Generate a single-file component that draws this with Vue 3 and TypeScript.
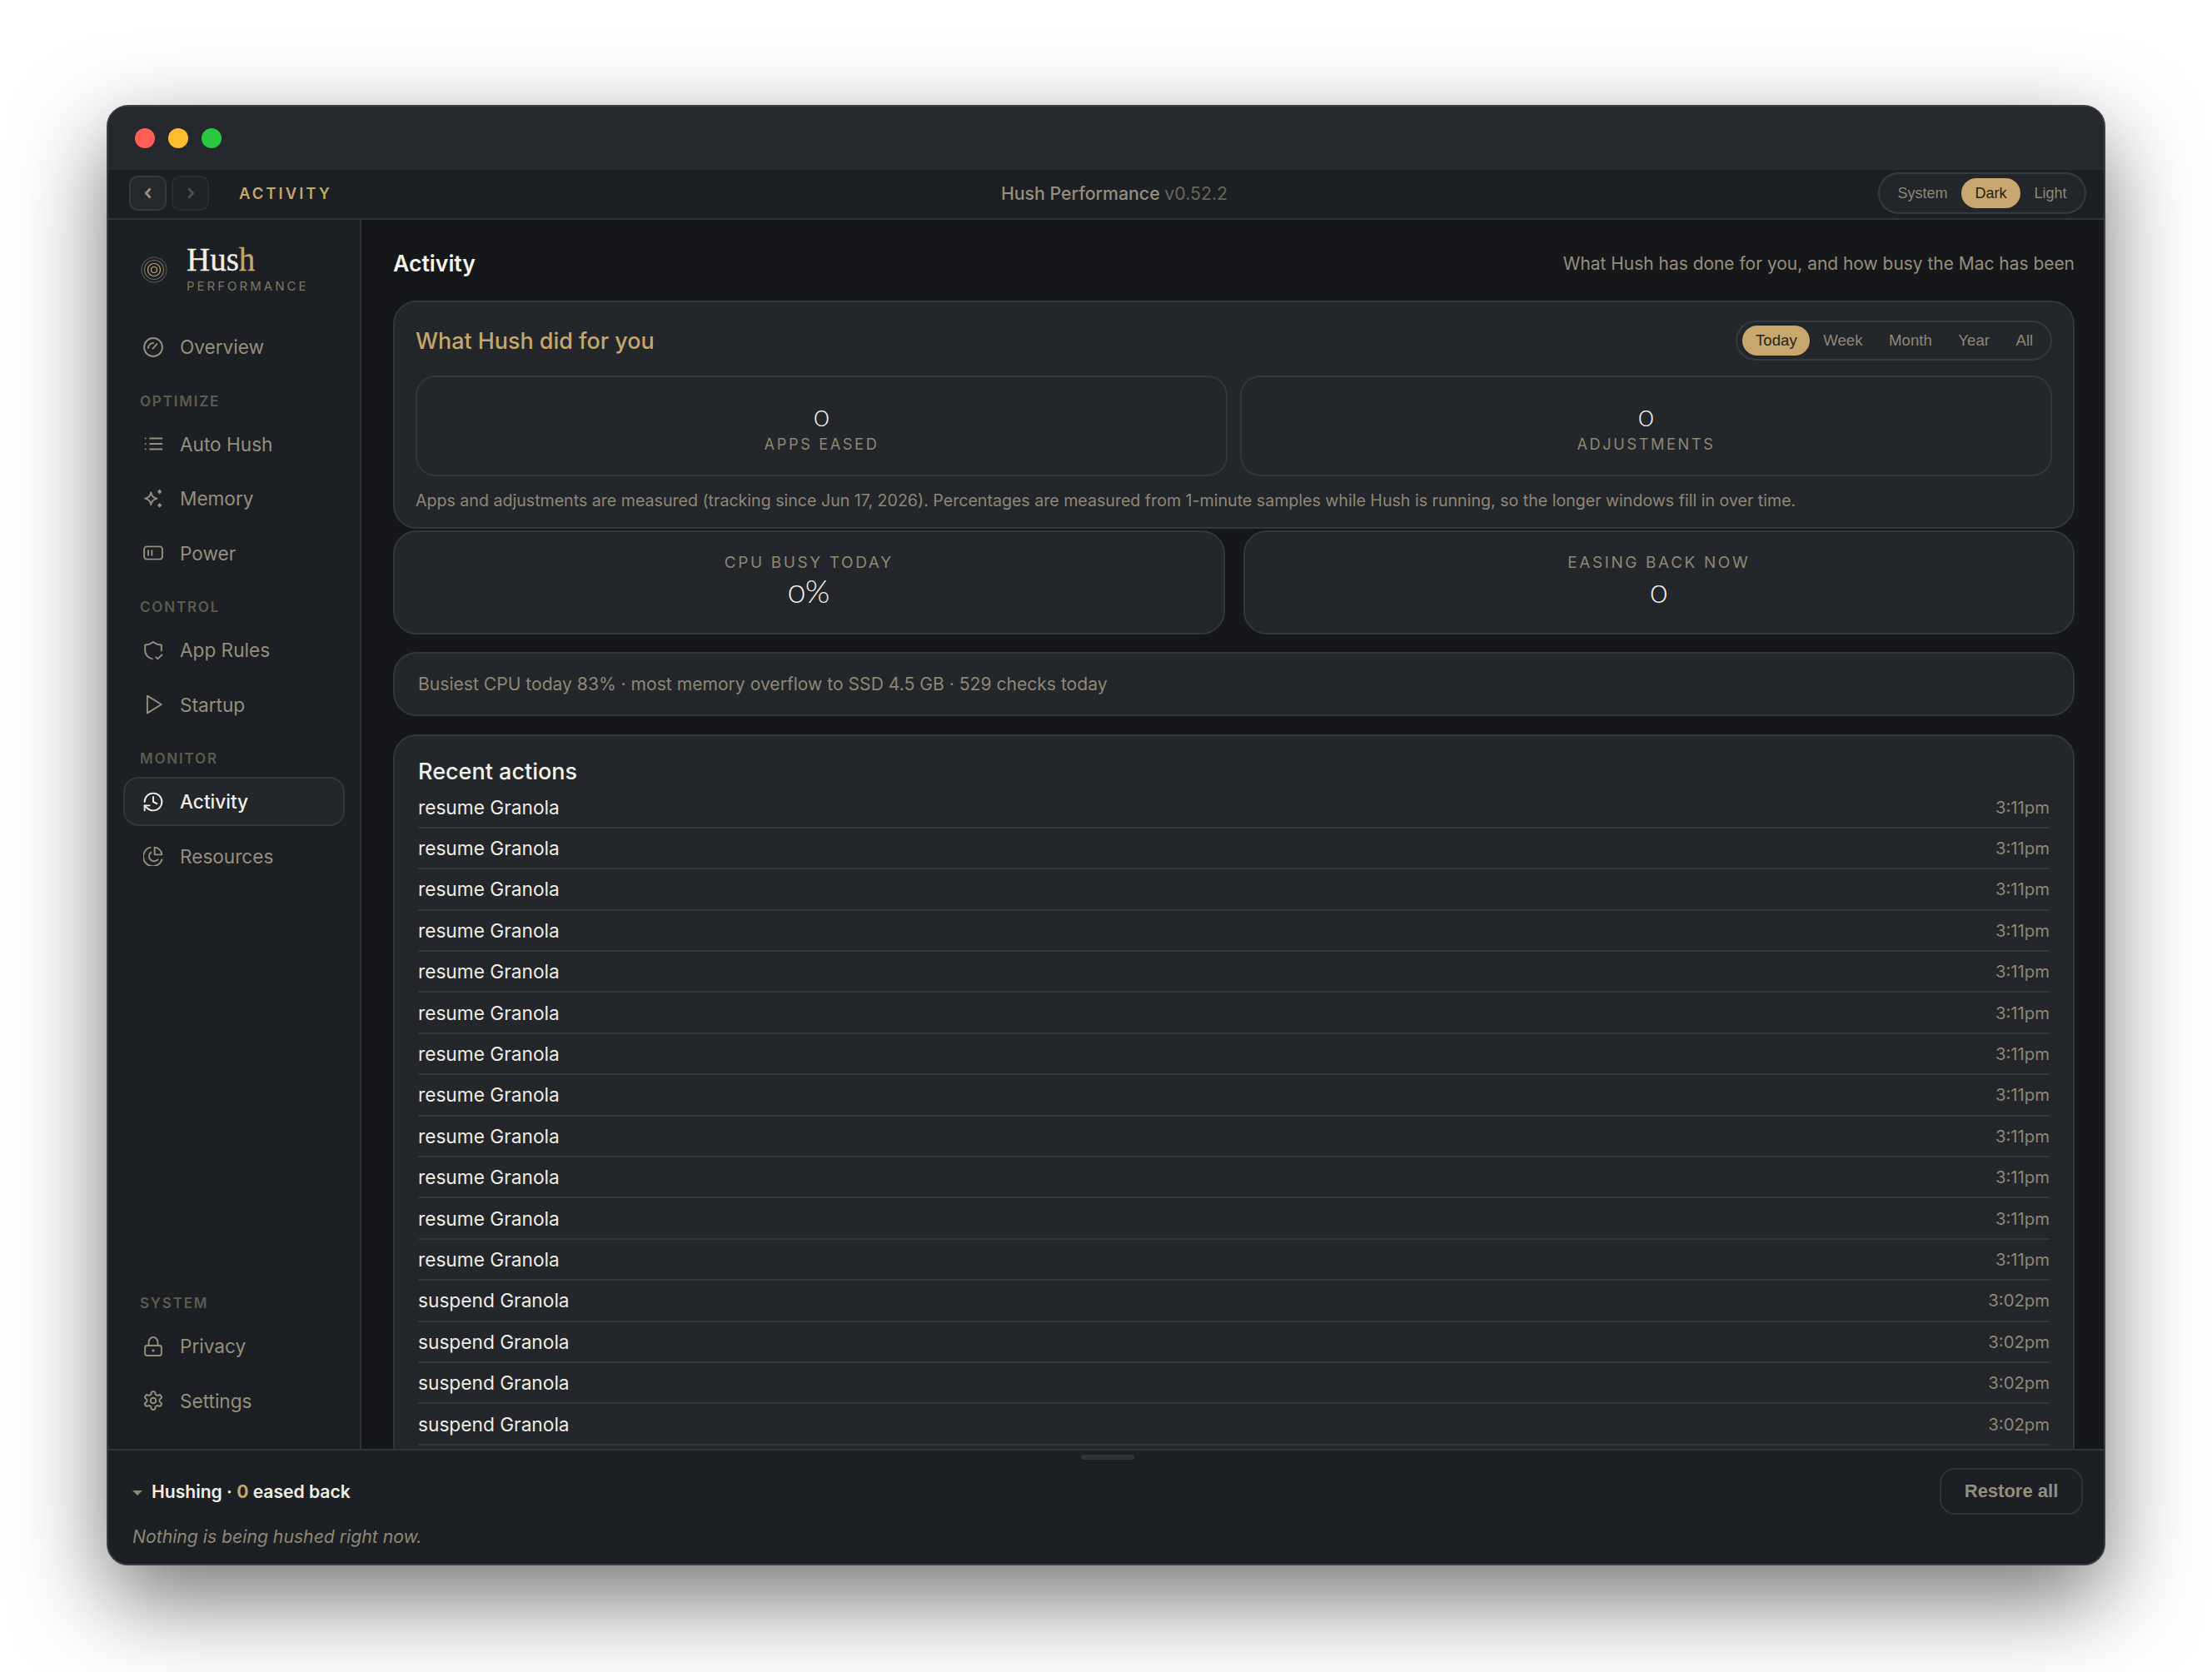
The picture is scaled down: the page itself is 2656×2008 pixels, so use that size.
<script setup lang="ts">
interface NavItem {
  label: string
  icon: string[]
  active?: boolean
}

const circle = (cx: number, cy: number, r: number) =>
  `M${cx + r} ${cy}a${r} ${r} 0 1 1-${r * 2} 0a${r} ${r} 0 1 1 ${r * 2} 0`

const icons: Record<string, string[]> = {
  gauge: [circle(12, 12, 10), 'M6.5 13a5.5 5.5 0 0 1 5.5-5.5', 'M11.5 13.5 16 8.5'],
  list: ['M8.5 6h13', 'M8.5 12h13', 'M8.5 18h13', 'M3.5 6h.01', 'M3.5 12h.01', 'M3.5 18h.01'],
  sparkle: ['M9.5 5c.7 4.300 2.400 6 6.500 6.800-4.100.7-5.800 2.500-6.500 6.800-.7-4.300-2.400-6.100-6.500-6.800 4.100-.8 5.800-2.500 6.500-6.800Z'],
  battery: ['M5 5h14.500a3 3 0 0 1 2.500 2.500v9a3 3 0 0 1-2.500 2.500H5a3 3 0 0 1-3-3V8a3 3 0 0 1 3-3Z', 'M6.500 9.500v5', 'M10.500 9.500v5'],
  shield: ['M21 12.500V6c-3.400 0-6.300-1.200-9-3.200C9.300 4.800 6.400 6 3 6v6c0 4.800 3.200 8 8 9.500', 'M15 19.500l2 2 4.500-4.500'],
  play: ['M5.500 2.500 21 12 5.500 21.500Z'],
  history: ['M2.500 12a9.500 9.500 0 1 1 9.500 9.500 10 10 0 0 1-7-2.900L2.500 16', 'M2.500 21.500V16H8', 'M12 6.500V12l4 2'],
  pie: ['M21.500 16A10.500 10.500 0 1 1 9 2.500', 'M17 16A5.500 5.500 0 1 1 9.500 8', 'M13.500 2.500a8.500 8.500 0 0 1 8 8h-8Z'],
  lock: ['M5 11h14a2 2 0 0 1 2 2v7a2 2 0 0 1-2 2H5a2 2 0 0 1-2-2v-7a2 2 0 0 1 2-2Z', 'M7 11V7a5 5 0 0 1 10 0v4', circle(12, 16.500, 0.6)],
  gear: [
    'M12.220 2h-.44a2 2 0 0 0-2 2v.18a2 2 0 0 1-1 1.730l-.43.25a2 2 0 0 1-2 0l-.15-.08a2 2 0 0 0-2.730.73l-.22.38a2 2 0 0 0 .73 2.730l.15.1a2 2 0 0 1 1 1.720v.51a2 2 0 0 1-1 1.740l-.15.09a2 2 0 0 0-.73 2.730l.22.38a2 2 0 0 0 2.730.73l.15-.08a2 2 0 0 1 2 0l.43.25a2 2 0 0 1 1 1.730V20a2 2 0 0 0 2 2h.44a2 2 0 0 0 2-2v-.18a2 2 0 0 1 1-1.730l.43-.25a2 2 0 0 1 2 0l.15.08a2 2 0 0 0 2.730-.73l.22-.39a2 2 0 0 0-.73-2.730l-.15-.08a2 2 0 0 1-1-1.740v-.5a2 2 0 0 1 1-1.740l.15-.09a2 2 0 0 0 .73-2.730l-.22-.38a2 2 0 0 0-2.730-.73l-.15.08a2 2 0 0 1-2 0l-.43-.25a2 2 0 0 1-1-1.730V4a2 2 0 0 0-2-2z',
    circle(12, 12, 3),
  ],
}

const navGroups: { title?: string; items: NavItem[] }[] = [
  { items: [{ label: 'Overview', icon: icons.gauge }] },
  {
    title: 'OPTIMIZE',
    items: [
      { label: 'Auto Hush', icon: icons.list },
      { label: 'Memory', icon: icons.sparkle },
      { label: 'Power', icon: icons.battery },
    ],
  },
  {
    title: 'CONTROL',
    items: [
      { label: 'App Rules', icon: icons.shield },
      { label: 'Startup', icon: icons.play },
    ],
  },
  {
    title: 'MONITOR',
    items: [
      { label: 'Activity', icon: icons.history, active: true },
      { label: 'Resources', icon: icons.pie },
    ],
  },
]

const systemItems: NavItem[] = [
  { label: 'Privacy', icon: icons.lock },
  { label: 'Settings', icon: icons.gear },
]

const themes = ['System', 'Dark', 'Light']
const periods = ['Today', 'Week', 'Month', 'Year', 'All']

const actions = [
  ...Array.from({ length: 12 }, () => ({ name: 'resume Granola', time: '3:11pm' })),
  ...Array.from({ length: 4 }, () => ({ name: 'suspend Granola', time: '3:02pm' })),
]
</script>

<template>
  <div class="page">
    <div class="window">
      <div class="titlebar">
        <span class="light red"></span>
        <span class="light yellow"></span>
        <span class="light green"></span>
      </div>

      <div class="toolbar">
        <div class="toolbar-left">
          <button class="nav-btn" type="button">
            <svg viewBox="0 0 24 24" width="24" height="24"><path d="M14.500 6.500 9.500 12l5 5.500" /></svg>
          </button>
          <button class="nav-btn off" type="button">
            <svg viewBox="0 0 24 24" width="24" height="24"><path d="M9.500 6.500 14.500 12l-5 5.500" /></svg>
          </button>
          <span class="crumb">ACTIVITY</span>
        </div>
        <div class="app-name">Hush Performance <span>v0.52.2</span></div>
        <div class="toolbar-right">
          <div class="seg theme">
            <button v-for="t in themes" :key="t" type="button" :class="{ on: t === 'Dark' }">{{ t }}</button>
          </div>
        </div>
      </div>

      <div class="body">
        <aside class="sidebar">
          <div class="brand">
            <svg class="brand-mark" viewBox="0 0 32 32" width="32" height="32">
              <circle cx="16" cy="16" r="15" stroke="#55534e" />
              <circle cx="16" cy="16" r="11.500" stroke="#77705f" />
              <circle cx="16" cy="16" r="7.500" stroke="#c5a66c" stroke-width="1.600" />
              <circle cx="16" cy="16" r="3.500" stroke="#c5a66c" stroke-width="1.600" />
            </svg>
            <div>
              <div class="brand-name">Hus<span>h</span></div>
              <div class="brand-sub">PERFORMANCE</div>
            </div>
          </div>

          <template v-for="(group, g) in navGroups" :key="g">
            <div v-if="group.title" class="section">{{ group.title }}</div>
            <a v-for="item in group.items" :key="item.label" class="item" :class="{ active: item.active }">
              <svg viewBox="1 1 22 22" width="24" height="24">
                <path v-for="(d, i) in item.icon" :key="i" :d="d" />
                <template v-if="item.label === 'Memory'">
                  <path class="solid" d="M19 1.500 21.500 4.200 19 6.900 16.500 4.200Z" />
                  <path class="solid" d="M19 16.500 21.500 19.200 19 21.900 16.500 19.200Z" />
                </template>
              </svg>
              {{ item.label }}
            </a>
          </template>

          <div class="system">
            <div class="section">SYSTEM</div>
            <a v-for="item in systemItems" :key="item.label" class="item">
              <svg viewBox="1 1 22 22" width="24" height="24">
                <path v-for="(d, i) in item.icon" :key="i" :d="d" />
              </svg>
              {{ item.label }}
            </a>
          </div>
        </aside>

        <main class="main">
          <header class="head">
            <h1>Activity</h1>
            <p>What Hush has done for you, and how busy the Mac has been</p>
          </header>

          <section class="card impact">
            <div class="impact-head">
              <h2>What Hush did for you</h2>
              <div class="seg period">
                <button v-for="p in periods" :key="p" type="button" :class="{ on: p === 'Today' }">{{ p }}</button>
              </div>
            </div>
            <div class="tiles">
              <div class="tile">
                <div class="value small">0</div>
                <div class="label">APPS EASED</div>
              </div>
              <div class="tile">
                <div class="value small">0</div>
                <div class="label">ADJUSTMENTS</div>
              </div>
            </div>
            <p class="note">
              Apps and adjustments are measured (tracking since Jun 17, 2026). Percentages are measured from 1-minute samples while Hush is running, so the longer windows fill in over time.
            </p>
          </section>

          <div class="pair">
            <div class="card stat">
              <div class="label">CPU BUSY TODAY</div>
              <div class="value">0%</div>
            </div>
            <div class="card stat">
              <div class="label">EASING BACK NOW</div>
              <div class="value">0</div>
            </div>
          </div>

          <div class="card summary">Busiest CPU today 83% · most memory overflow to SSD 4.5 GB · 529 checks today</div>

          <section class="card recent">
            <h3>Recent actions</h3>
            <div v-for="(a, i) in actions" :key="i" class="row">
              <span>{{ a.name }}</span>
              <time>{{ a.time }}</time>
            </div>
          </section>
        </main>
      </div>

      <footer class="footer">
        <span class="grip"></span>
        <div class="footer-top">
          <div class="status"><i class="caret"></i>Hushing · <b>0</b> eased back</div>
          <button class="restore" type="button">Restore all</button>
        </div>
        <div class="idle">Nothing is being hushed right now.</div>
      </footer>
    </div>
  </div>
</template>

<style>
html,
body {
  margin: 0;
  background: #fff;
}
</style>

<style scoped>
.page {
  width: 2656px;
  height: 2008px;
  box-sizing: border-box;
  padding: 126px 128px 128px;
  overflow: hidden;
  background: #fff;
  font-family: Inter, "Noto Sans", sans-serif;
}

.window {
  height: 1754px;
  display: flex;
  flex-direction: column;
  box-sizing: border-box;
  border: 2px solid #3b3e43;
  border-radius: 26px;
  overflow: hidden;
  background: #1c1f23;
  box-shadow: 0 40px 110px rgba(0, 0, 0, 0.55);
}

.titlebar {
  height: 76px;
  flex: none;
  display: flex;
  align-items: center;
  gap: 16px;
  padding-left: 32px;
  box-sizing: border-box;
  background: #25282c;
}

.light {
  width: 24px;
  height: 24px;
  border-radius: 50%;
}

.red { background: #ff5f57; }
.yellow { background: #febc2e; }
.green { background: #28c840; }

.toolbar {
  height: 60px;
  flex: none;
  display: grid;
  grid-template-columns: 1fr auto 1fr;
  align-items: center;
  box-sizing: border-box;
  padding: 0 21px 2px 25px;
  background: #1c1f23;
  border-bottom: 2px solid #303337;
}

.toolbar-left {
  display: flex;
  align-items: center;
  gap: 6px;
}

.nav-btn {
  width: 45px;
  height: 42px;
  padding: 0;
  display: grid;
  place-items: center;
  background: #25282c;
  border: 2px solid #36393d;
  border-radius: 10px;
}

.nav-btn svg {
  fill: none;
  stroke: #958d7b;
  stroke-width: 3;
}

.nav-btn.off {
  background: #1f2226;
  border-color: #292c30;
}

.nav-btn.off svg {
  stroke: #4f4d47;
}

.crumb {
  margin-left: 30px;
  color: #c5a66c;
  font-size: 18.500px;
  font-weight: 600;
  letter-spacing: 3px;
}

.app-name {
  margin-left: 16px;
  color: #968e7d;
  font-size: 21.300px;
  font-weight: 500;
  white-space: nowrap;
}

.app-name span {
  color: #696559;
  font-weight: 400;
}

.toolbar-right {
  display: flex;
  justify-content: flex-end;
}

.seg {
  display: flex;
  align-items: center;
  box-sizing: border-box;
  border: 2px solid #36393d;
  border-radius: 26px;
  background: #23262a;
}

.seg button {
  height: 36px;
  padding: 0 16.500px;
  border: none;
  border-radius: 18px;
  background: none;
  color: #8f8775;
  font-family: "Liberation Sans", Arial, sans-serif;
  font-size: 18px;
  white-space: nowrap;
}

.seg button.on {
  background: #c8a76e;
  color: #2a2315;
}

.theme {
  height: 50px;
  padding: 0 5px;
}

.period {
  height: 48px;
  padding: 0 5px 0 6px;
}

.period button {
  padding: 0 15.800px;
  font-size: 18.600px;
}

.body {
  flex: 1;
  min-height: 0;
  display: flex;
}

.sidebar {
  width: 304px;
  flex: none;
  display: flex;
  flex-direction: column;
  box-sizing: border-box;
  padding: 0 18px 22px;
  background: #1c1f23;
  border-right: 2px solid #303337;
}

.brand {
  height: 123px;
  flex: none;
  box-sizing: border-box;
  padding: 28px 0 0 21px;
  display: flex;
  align-items: flex-start;
  gap: 23px;
}

.brand-mark {
  margin-top: 16px;
  flex: none;
  fill: none;
}

.brand-mark circle {
  stroke-width: 1.200;
}

.brand-name {
  font-family: "Liberation Serif", "Times New Roman", serif;
  font-size: 39px;
  line-height: 40px;
  color: #f3efe7;
  -webkit-text-stroke: 0.300px #f3efe7;
}

.brand-name span {
  color: #c5a66c;
  -webkit-text-stroke: 0.300px #c5a66c;
}

.brand-sub {
  margin-top: 2px;
  color: #7d7767;
  font-size: 15px;
  line-height: 20px;
  letter-spacing: 3px;
}

.section {
  margin: 17px 0 10px 20px;
  color: #5e5b51;
  font-size: 17px;
  line-height: 24px;
  font-weight: 600;
  letter-spacing: 1.800px;
}

.item {
  height: 59px;
  flex: none;
  margin-bottom: 6.500px;
  box-sizing: border-box;
  padding-left: 22px;
  display: flex;
  align-items: center;
  gap: 20px;
  color: #968e7d;
  font-size: 22.600px;
  border: 2px solid transparent;
  border-radius: 18px;
}

.item svg {
  flex: none;
  fill: none;
  stroke: currentColor;
  stroke-width: 1.800;
  stroke-linecap: round;
  stroke-linejoin: round;
}

.item svg .solid {
  fill: currentColor;
  stroke: none;
}

.item.active {
  background: #23262a;
  border-color: #33363a;
  color: #f3efe7;
  font-weight: 500;
}

.system {
  margin-top: auto;
}

.main {
  flex: 1;
  min-width: 0;
  box-sizing: border-box;
  padding: 0 35px 0 38px;
  overflow: hidden;
  background: #16171a;
}

.head {
  height: 97px;
  display: flex;
  align-items: center;
  justify-content: space-between;
  padding-top: 7px;
  box-sizing: border-box;
}

.head h1 {
  margin: 0;
  color: #f5f2ea;
  font-size: 26.600px;
  font-weight: 600;
}

.head p {
  margin: 0;
  color: #968e7d;
  font-size: 20.950px;
}

.card {
  box-sizing: border-box;
  background: #23262a;
  border: 2px solid #33363a;
  border-radius: 28px;
}

.impact {
  height: 274px;
  padding: 0 25px;
}

.impact-head {
  height: 88px;
  box-sizing: border-box;
  padding-top: 4px;
  display: flex;
  align-items: center;
  justify-content: space-between;
}

.impact-head h2 {
  margin: 0;
  color: #c5a66c;
  font-size: 26.900px;
  font-weight: 500;
}

.tiles {
  display: grid;
  grid-template-columns: 1fr 1fr;
  gap: 15px;
}

.tile {
  height: 121px;
  box-sizing: border-box;
  padding-top: 28px;
  display: flex;
  flex-direction: column;
  align-items: center;
  border: 2px solid #33363a;
  border-radius: 24px;
}

.tile .label {
  margin-top: 3px;
  font-size: 18.200px;
}

.value {
  color: #f5f2ea;
  font-family: Lato, "Open Sans", sans-serif;
  font-variant-numeric: oldstyle-nums;
  font-size: 38px;
  font-weight: 300;
  line-height: 36px;
}

.value.small {
  font-size: 34px;
}

.label {
  color: #8f8775;
  font-size: 19px;
  line-height: 26px;
  letter-spacing: 2.600px;
}

.note {
  margin: 14px 0 0;
  color: #8f8775;
  font-size: 19.600px;
  line-height: 30px;
  white-space: nowrap;
}

.pair {
  margin-top: 2px;
  display: grid;
  grid-template-columns: 1fr 1fr;
  gap: 22px;
}

.stat {
  height: 125px;
  padding-top: 24px;
  display: flex;
  flex-direction: column;
  align-items: center;
  gap: 2px;
}

.summary {
  height: 77px;
  margin-top: 21px;
  padding-left: 28px;
  display: flex;
  align-items: center;
  color: #8f8775;
  font-size: 21.100px;
}

.recent {
  margin-top: 22px;
  height: 1100px;
  padding: 25.500px 28px 0 28px;
}

.recent h3 {
  margin: 0 0 2px;
  color: #f5f2ea;
  font-size: 27px;
  line-height: 34px;
  font-weight: 500;
}

.row {
  height: 49.400px;
  box-sizing: border-box;
  display: flex;
  align-items: center;
  justify-content: space-between;
  border-bottom: 2px solid #33363a;
  color: #efece4;
  font-size: 22.700px;
}

.row time {
  color: #8f8775;
  font-size: 20.300px;
}

.footer {
  position: relative;
  height: 138px;
  flex: none;
  box-sizing: border-box;
  padding: 21px 25px 0 29px;
  background: #1c1f23;
  border-top: 2px solid #303337;
}

.grip {
  position: absolute;
  left: 1168px;
  top: 5px;
  width: 64px;
  height: 6px;
  border-radius: 3px;
  background: #313337;
}

.footer-top {
  display: flex;
  align-items: center;
  justify-content: space-between;
}

.status {
  display: flex;
  align-items: center;
  white-space: pre;
  color: #f3efe7;
  font-size: 21.100px;
  font-weight: 600;
}

.status b {
  color: #c5a66c;
  font-weight: 700;
}

.caret {
  width: 0;
  height: 0;
  margin: 3px 11px 0 0;
  border-left: 6px solid transparent;
  border-right: 6px solid transparent;
  border-top: 6px solid #8f8775;
}

.restore {
  width: 172px;
  height: 56px;
  padding: 0;
  background: none;
  border: 2px solid #303337;
  border-radius: 18px;
  color: #968e7d;
  font-family: "Liberation Sans", Arial, sans-serif;
  font-size: 22px;
  font-weight: 700;
}

.idle {
  margin-top: 13px;
  color: #8f8775;
  font-size: 21.200px;
  font-style: italic;
}
</style>
